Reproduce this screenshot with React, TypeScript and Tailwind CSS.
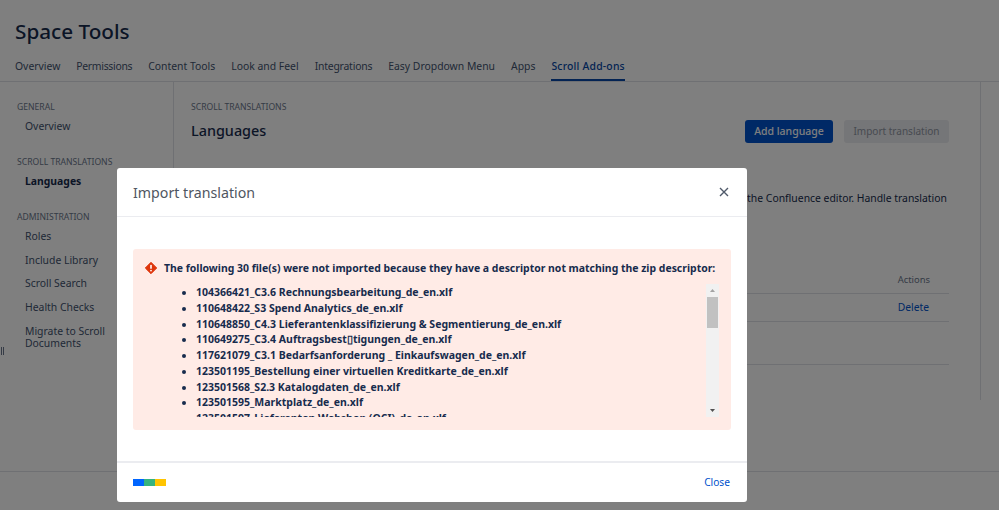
const font = { fontFamily: '"Noto Sans", sans-serif' };

const tabs: [string, string][] = [
  ["Overview", ""],
  ["Permissions", "tracking-[-0.3px]"],
  ["Content Tools", ""],
  ["Look and Feel", ""],
  ["Integrations", "tracking-[-0.2px]"],
  ["Easy Dropdown Menu", ""],
  ["Apps", ""],
];
const files = [
  "104366421_C3.6 Rechnungsbearbeitung_de_en.xlf",
  "110648422_S3 Spend Analytics_de_en.xlf",
  "110648850_C4.3 Lieferantenklassifizierung & Segmentierung_de_en.xlf",
  "110649275_C3.4 Auftragsbest\u25AFtigungen_de_en.xlf",
  "117621079_C3.1 Bedarfsanforderung _ Einkaufswagen_de_en.xlf",
  "123501195_Bestellung einer virtuellen Kreditkarte_de_en.xlf",
  "123501568_S2.3 Katalogdaten_de_en.xlf",
  "123501595_Marktplatz_de_en.xlf",
  "123501597_Lieferanten Webshop (OCI)_de_en.xlf",
  "123501600_C2.1 Katalogpflege_de_en.xlf",
];

function SideHead({ children, className = "" }: { children: React.ReactNode; className?: string }) {
  return <div className={`text-[8.6px] leading-[14px] text-[#6b778c] uppercase ${className}`}>{children}</div>;
}

function SideItem({ children, bold = false, first = false }: { children: React.ReactNode; bold?: boolean; first?: boolean }) {
  return (
    <div className={`pl-2 ${first ? "mt-[6px]" : "mt-[11.7px]"} text-[10.4px] leading-[12px] ${bold ? "font-bold text-[#172b4d]" : "text-[#42526e]"}`}>{children}</div>
  );
}

export default function App() {
  return (
    <div className="relative h-[510px] w-[999px] overflow-hidden bg-white" style={font}>
      <div className="px-[15px] pt-[16px]">
        <h1 className="text-[20.7px] leading-[30px] font-medium text-[#172b4d]">Space Tools</h1>
      </div>
      <div className="flex h-[36px] gap-4 border-b border-[#dfe1e6] px-[15px] text-[10.4px] leading-[16px] text-[#42526e]">
        {tabs.map(([t, c]) => (
          <div key={t} className={`pt-[12px] ${c}`}>{t}</div>
        ))}
        <div className="h-[35px] border-b-2 border-[#0747a6] pt-[12px] font-medium tracking-[0.2px] text-[#0747a6]">Scroll Add-ons</div>
      </div>
      <div className="flex h-[318px] w-[981px] border-r border-[#dfe1e6]">
        <aside className="w-[174px] shrink-0 border-r border-[#dfe1e6] pl-[17px] pt-[18px]">
          <SideHead>General</SideHead>
          <SideItem first>Overview</SideItem>
          <SideHead className="mt-[23px]">Scroll Translations</SideHead>
          <SideItem first bold>Languages</SideItem>
          <SideHead className="mt-[23px]">Administration</SideHead>
          <SideItem first>Roles</SideItem>
          <SideItem>Include Library</SideItem>
          <SideItem>Scroll Search</SideItem>
          <SideItem>Health Checks</SideItem>
          <SideItem>
            Migrate to Scroll
            <br />
            Documents
          </SideItem>
        </aside>
        <main className="flex-1 pl-[17px] pr-[31px] pt-[18px]">
          <div className="text-[8.6px] leading-[14px] text-[#6b778c] uppercase">Scroll Translations</div>
          <div className="mt-[6px] flex items-center justify-between">
            <h2 className="pb-[2px] text-[14.4px] leading-[21px] font-medium text-[#172b4d]">Languages</h2>
            <div className="flex gap-[11px]">
              <button className="h-[23px] w-[88px] rounded-[3px] bg-[#0052cc] text-[10.5px] font-medium text-white">Add language</button>
              <button className="h-[23px] w-[105px] rounded-[3px] bg-[#ebecf0] text-[10px] text-[#8f96a3]">Import translation</button>
            </div>
          </div>
          <p className="mt-[47px] pr-[2px] text-right text-[10.4px] leading-[16px] text-[#172b4d]">the Confluence editor. Handle translation</p>
          <div className="mt-[67px] flex h-[21px] justify-end border-b border-[#dfe1e6] pr-[19px] text-[9.4px] leading-[14px] text-[#6b778c]">Actions</div>
          <div className="flex h-[28px] items-center justify-end border-b border-[#dfe1e6] pr-[20px] pt-[1px] text-[10.3px] text-[#0052cc]">Delete</div>
          <div className="h-[43px] border-b border-[#dfe1e6]" />
        </main>
      </div>
      <div className="mt-[71px] border-t border-[#dfe1e6]" />

      <div className="absolute left-[1px] top-[347px] h-[8px] w-[3px] border-x border-[#6b778c]" />
      <div className="absolute inset-0 bg-black/50" />

      <div className="absolute left-[117px] top-[168px] flex h-[334px] w-[630px] flex-col rounded-[3px] bg-white">
        <div className="flex h-[49px] items-center justify-between border-b border-[#ebecf0] pl-4 pr-[18px]">
          <h3 className="pt-[2px] text-[14.2px] leading-[20px] text-[#4f5661]">Import translation</h3>
          <svg width="10" height="10" viewBox="0 0 10 10" className="mb-[1px]">
            <path d="M1 1l8 8M9 1l-8 8" stroke="#505a6a" strokeWidth="1.4" fill="none" />
          </svg>
        </div>
        <div className="flex-1 px-4 pt-8">
          <div className="flex h-[181px] flex-col rounded-[3px] bg-[#ffebe6] px-[12px] pt-[11px]">
            <div className="flex items-center gap-[7px] text-[10.45px] leading-[16px] font-bold whitespace-nowrap text-[#172b4d]">
              <svg width="12" height="12" viewBox="0 0 12 12" className="shrink-0">
                <path d="M6 0.3L11.7 6 6 11.7 0.3 6Z" fill="#de350b" stroke="#de350b" strokeLinejoin="round" />
                <rect x="5.2" y="2.8" width="1.6" height="4" rx="0.6" fill="#fff" />
                <circle cx="6" cy="8.6" r="0.9" fill="#fff" />
              </svg>
              The following 30 file(s) were not imported because they have a descriptor not matching the zip descriptor:
            </div>
            <div className="mt-[8px] flex h-[133px] justify-between overflow-hidden">
              <ul className="list-disc pl-[51px] pt-[1px] text-[10.5px] leading-[15.75px] font-bold text-[#172b4d]">
                {files.map((f) => (
                  <li key={f} className="whitespace-nowrap">{f}</li>
                ))}
              </ul>
              <div className="flex h-[133px] w-[13px] flex-col items-center bg-[#f1f1f1]">
                <svg width="7" height="13" viewBox="0 0 7 13" className="shrink-0">
                  <path d="M3.5 5L6 8H1Z" fill="#a3a3a3" />
                </svg>
                <div className="h-[31px] w-[11px] bg-[#c1c1c1]" />
                <svg width="7" height="13" viewBox="0 0 7 13" className="mt-auto shrink-0">
                  <path d="M1 5H6L3.5 8Z" fill="#505050" />
                </svg>
              </div>
            </div>
          </div>
        </div>
        <div className="flex h-[41px] items-center justify-between border-t-2 border-[#ebecf0] pl-4 pr-[17px]">
          <div className="flex">
            <div className="h-[7px] w-[11px] bg-[#0065ff]" />
            <div className="h-[7px] w-[11px] bg-[#36b37e]" />
            <div className="h-[7px] w-[11px] bg-[#ffc400]" />
          </div>
          <span className="text-[10.2px] text-[#0052cc]">Close</span>
        </div>
      </div>
    </div>
  );
}
